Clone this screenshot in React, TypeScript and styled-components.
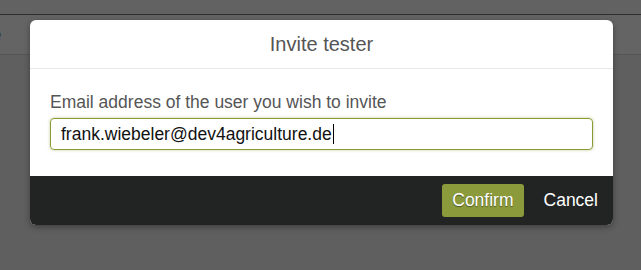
import React from 'react';
import styled, { createGlobalStyle } from 'styled-components';

const GlobalStyle = createGlobalStyle`
  html, body {
    margin: 0;
    padding: 0;
    background: #5f5f5f;
  }
  body {
    font-family: "Liberation Sans", Arial, sans-serif;
  }
`;

const Page = styled.div`
  position: relative;
  width: 641px;
  height: 270px;
  overflow: hidden;
  background: #5f5f5f;
`;

const TopStrip = styled.div`
  height: 14px;
  background: #626262;
  border-bottom: 1px solid #2e2e2e;
`;

const SubBar = styled.div`
  height: 39px;
  background: #646464;
  border-bottom: 1px solid #555;
  display: flex;
  align-items: center;
  color: #2d3a4a;
  font-size: 17px;
  margin-left: -8px;
`;

const Modal = styled.div`
  position: absolute;
  left: 30px;
  top: 20px;
  width: 583px;
  background: #fff;
  border-radius: 6px;
  overflow: hidden;
  box-shadow: 0 2px 6px rgba(0, 0, 0, 0.35);
`;

const Header = styled.div`
  height: 48px;
  border-bottom: 1px solid #e8e8e8;
  display: flex;
  align-items: center;
  justify-content: center;
  font-size: 20px;
  color: #555;
`;

const Body = styled.div`
  padding: 23px 20px 26px 20px;
  display: flex;
  flex-direction: column;
  gap: 6px;
`;

const Label = styled.label`
  font-size: 17.5px;
  color: #555;
  line-height: 20px;
`;

const Input = styled.div`
  height: 30px;
  border: 1px solid #8c9a36;
  border-radius: 4px;
  box-shadow: 0 0 3px rgba(140, 154, 54, 0.5);
  display: flex;
  align-items: center;
  padding: 0 10px;
  font-size: 17.5px;
  color: #111;
`;

const Caret = styled.span`
  display: inline-block;
  width: 1px;
  height: 20px;
  background: #000;
  margin-left: 1px;
`;

const Footer = styled.div`
  height: 49px;
  background: #222423;
  display: flex;
  align-items: center;
  justify-content: flex-end;
  padding: 0 15px 0 0;
  gap: 20px;
`;

const Button = styled.button<{ $primary?: boolean }>`
  font-family: "Liberation Sans", Arial, sans-serif;
  font-size: 17.5px;
  color: #fff;
  border: none;
  border-radius: 3px;
  cursor: pointer;
  height: 33px;
  padding: 0 ${(p) => (p.$primary ? '10px' : '0')};
  background: ${(p) => (p.$primary ? '#8b9a3b' : 'transparent')};
  text-shadow: ${(p) => (p.$primary ? '0 1px 1px rgba(0,0,0,0.45)' : 'none')};
`;

const App: React.FC = () => {
  return (
    <Page>
      <GlobalStyle />
      <TopStrip />
      <SubBar>e</SubBar>
      <Modal>
        <Header>Invite tester</Header>
        <Body>
          <Label>Email address of the user you wish to invite</Label>
          <Input>
            frank.wiebeler@dev4agriculture.de
            <Caret />
          </Input>
        </Body>
        <Footer>
          <Button $primary>Confirm</Button>
          <Button>Cancel</Button>
        </Footer>
      </Modal>
    </Page>
  );
};

export default App;
